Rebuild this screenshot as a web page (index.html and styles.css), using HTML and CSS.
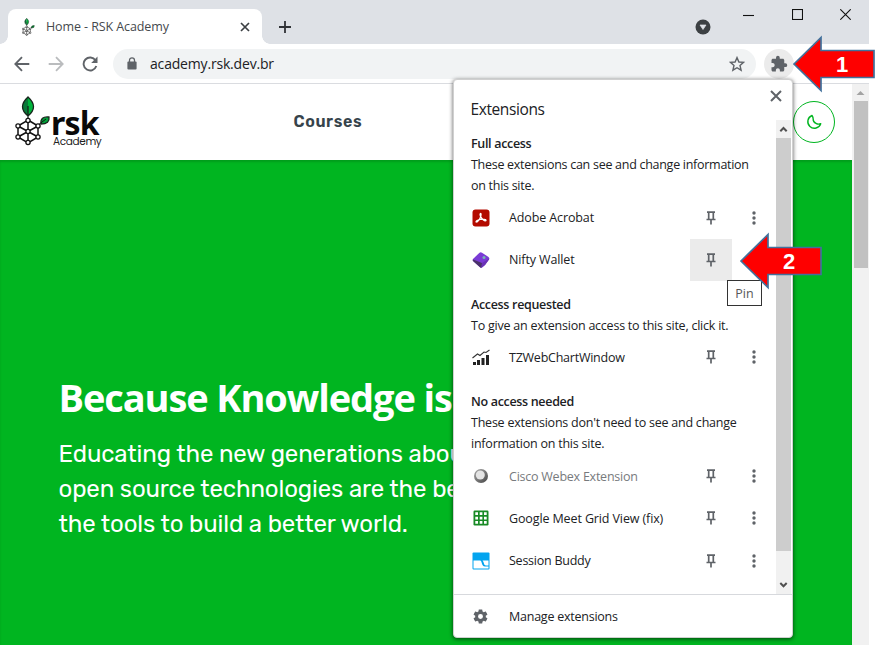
FILE: index.html
```html
<!DOCTYPE html>
<html lang="en">
<head>
<meta charset="utf-8">
<title>Home - RSK Academy</title>
<link rel="stylesheet" href="styles.css">
</head>
<body>
<svg class="defs" width="0" height="0">
  <symbol id="pin" viewBox="0 0 10 14"><path d="M1 1.100H9M2.700 1V8M7.300 1V8M0.500 8.500H9.500M5 8.500V13.500" fill="none" stroke="#5f6368" stroke-width="1.700"/></symbol>
  <symbol id="dots" viewBox="0 0 4 14"><circle cx="2" cy="2" r="1.700"/><circle cx="2" cy="7" r="1.700"/><circle cx="2" cy="12" r="1.700"/></symbol>
  <symbol id="tree" viewBox="0 0 36 50">
    <path d="M13 1Q2 11 13 20Z" fill="#087a38"/><path d="M13 1Q24 11 13 20Z" fill="#00b43c"/>
    <path d="M13 1Q2 11 13 20Q24 11 13 1ZM13 10V24" fill="none" stroke="#17251c" stroke-width="1.3"/>
    <path d="M26 28Q25 20 34 21Q35 28 26 28Z" fill="#00a33a" stroke="#17251c" stroke-width="1.3"/>
    <path d="M22 30L27 26L31 23" fill="none" stroke="#111" stroke-width="1"/>
    <path d="M13 24L23 30V41L13 47L3 41V30ZM13 24V47M3 30L23 41M23 30L3 41" fill="none" stroke="#111" stroke-width="1.500"/>
    <g fill="#fff" stroke="#111" stroke-width="1.300"><circle cx="13" cy="24.5" r="2.1"/><circle cx="23" cy="30" r="2.1"/><circle cx="23" cy="41" r="2.1"/><circle cx="13" cy="46.5" r="2.1"/><circle cx="3" cy="41" r="2.1"/><circle cx="3" cy="30" r="2.1"/><circle cx="13" cy="35.5" r="2.1"/></g>
  </symbol>
</svg>
<div class="window">
  <div class="tabstrip">
    <div class="tab">
      <svg class="favicon" width="13" height="18"><use href="#tree"/></svg>
      <span class="tab-title">Home - RSK Academy</span>
      <svg class="tab-close" width="10" height="10" viewBox="0 0 10 10"><path d="M1 1L9 9M9 1L1 9" stroke="#3c4043" stroke-width="1.7"/></svg>
    </div>
    <svg class="new-tab" width="14" height="14" viewBox="0 0 14 14"><path d="M7 1V13M1 7H13" stroke="#303236" stroke-width="1.8"/></svg>
    <div class="controls">
      <svg class="tab-search" width="16" height="16" viewBox="0 0 16 16"><circle cx="8" cy="8" r="7.5" fill="#3c4043"/><path d="M5 6H11L8 10.5Z" fill="#dee1e6" stroke="#dee1e6" stroke-width=".7"/></svg>
      <svg width="11" height="11" viewBox="0 0 11 11"><path d="M0 6.500H11" stroke="#111" stroke-width="1.1"/></svg>
      <svg width="11" height="11" viewBox="0 0 11 11"><rect x=".5" y=".5" width="10" height="10" fill="none" stroke="#111" stroke-width="1.1"/></svg>
      <svg width="11" height="11" viewBox="0 0 11 11"><path d="M.3 .3L10.7 10.7M10.7 .3L.3 10.7" stroke="#111" stroke-width="1.1"/></svg>
    </div>
  </div>
  <div class="toolbar">
    <svg class="nav" width="16" height="16" viewBox="0 0 16 16"><path d="M15.3 8H1.5M8 1.2L1.3 8L8 14.8" fill="none" stroke="#5f6368" stroke-width="1.8"/></svg>
    <svg class="nav" width="16" height="16" viewBox="0 0 16 16"><path d="M.7 8H14.5M8 1.2L14.7 8L8 14.8" fill="none" stroke="#babcbe" stroke-width="1.8"/></svg>
    <svg class="nav" width="16" height="16" viewBox="0 0 16 16"><path d="M13.5 4.3A6.5 6.5 0 1 0 14.3 10" fill="none" stroke="#5f6368" stroke-width="1.9"/><path d="M15.5 .6V7H9.2Z" fill="#5f6368"/></svg>
    <div class="omnibox">
      <svg width="10" height="13" viewBox="0 0 10 13"><rect x=".4" y="4.5" width="9.2" height="8" rx="1" fill="#5f6368"/><path d="M2.5 5V3.3A2.5 2.5 0 0 1 7.5 3.3V5" fill="none" stroke="#5f6368" stroke-width="1.3"/></svg>
      <span class="url">academy.rsk.dev.br</span>
      <svg class="star" width="16" height="16" viewBox="0 0 16 16"><path d="M8 1.6L9.9 6L14.6 6.4L11 9.5L12.1 14.2L8 11.7L3.9 14.2L5 9.5L1.4 6.4L6.1 6Z" fill="none" stroke="#5f6368" stroke-width="1.4"/></svg>
    </div>
    <div class="ext-button"><svg width="18" height="18" viewBox="0 0 24 24"><path fill="#5f6368" d="M20.5 11H19V7c0-1.1-.9-2-2-2h-4V3.500a2.500 2.500 0 0 0-5 0V5H4c-1.100 0-1.990.9-1.990 2v3.800H3.500c1.490 0 2.700 1.210 2.700 2.700s-1.210 2.700-2.700 2.700H2V20c0 1.100.9 2 2 2h3.800v-1.500c0-1.490 1.210-2.700 2.700-2.700s2.700 1.210 2.700 2.700V22H17c1.100 0 2-.9 2-2v-4h1.500a2.500 2.500 0 0 0 0-5z"/></svg></div>
  </div>
  <div class="viewport">
    <div class="page">
      <header class="site-header">
        <div class="brand">
          <svg width="36" height="50"><use href="#tree"/></svg>
          <div class="brand-text"><span class="brand-name">rsk</span><span class="brand-sub">Academy</span></div>
        </div>
        <span class="courses">Courses</span>
        <div class="theme"><svg width="16" height="16" viewBox="0 0 16 16"><path d="M6 1.500A6.600 6.600 0 1 0 14.700 9.700A5 5 0 0 1 10 9.300Q7 8 7.200 5.200Q7.200 3 6 1.500Z" fill="none" stroke="#00b520" stroke-width="1.4" stroke-linejoin="round"/></svg></div>
      </header>
      <main class="hero">
        <h1>Because Knowledge is</h1>
        <p>Educating the new generations about<br>open source technologies are the best<br>the tools to build a better world.</p>
      </main>
    </div>
    <div class="page-scroll">
      <svg width="17" height="17" viewBox="0 0 17 17"><path d="M4.500 11L8.500 7L12.500 11Z" fill="#a3a3a3"/></svg>
      <div class="page-thumb"></div>
    </div>
  </div>
</div>

<section class="popup">
  <div class="popup-head"><h2>Extensions</h2>
    <svg class="popup-close" width="12" height="12" viewBox="0 0 12 12"><path d="M1 1L11 11M11 1L1 11" stroke="#5f6368" stroke-width="2"/></svg></div>
  <div class="popup-body">
    <div class="list">
      <div class="group">
        <h3>Full access</h3>
        <p class="tight">These extensions can see and change information<br>on this site.</p>
        <div class="row"><svg class="ico" width="18" height="18" viewBox="0 0 18 18"><rect x=".5" y=".5" width="17" height="17" rx="3" fill="#b30b00"/><path d="M8.500 4.500C9.500 4.500 9 7.500 7.800 9.700C6.500 12 4.500 13.500 4 12.800C4 11.500 7.500 10.200 10.500 10.200C13 10.200 14.500 11 13.800 11.700C12.500 12.200 9.700 10 8.600 7.500C8 6 7.800 4.700 8.500 4.500Z" fill="none" stroke="#fff" stroke-width="1.300"/></svg><span class="name adobe">Adobe Acrobat</span><span class="pin"><svg width="10" height="14"><use href="#pin"/></svg></span><svg class="more" width="4" height="14"><use href="#dots"/></svg></div>
        <div class="row"><svg class="ico" width="18" height="18" viewBox="0 0 18 18"><path d="M7.500 1.700Q8.700 1 10 1.700L16.500 6Q17.700 7 17 8.500L13 14L10 16.500Q9 17 8 16.200L1 10Q.3 9 1 8Z" fill="#7a3bd6"/><path d="M1 8.500L10 12L9.500 16.800Q8.800 16.900 8 16.200L1 10Q.5 9.300 1 8.500Z" fill="#4a3269"/><path d="M10 12L17.200 7.500Q17.300 8 17 8.500L13 14L9.500 16.800Z" fill="#6a33b5"/><circle cx="12" cy="6.500" r="1.500" fill="#75b8b0"/></svg><span class="name adobe">Nifty Wallet</span><span class="pin hovered"><svg width="10" height="14"><use href="#pin"/></svg></span></div>
      </div>
      <div class="group">
        <h3>Access requested</h3>
        <p>To give an extension access to this site, click it.</p>
        <div class="row"><svg class="ico" width="18" height="18" viewBox="0 0 18 18"><path d="M1 14H4V17H1ZM5 12H8V17H5ZM9.500 10H12.500V17H9.500ZM14 7H17V17H14Z" fill="#222"/><path d="M.5 10L5.500 6L8 7.500L12 4L14 4.500L17.500 2" fill="none" stroke="#333" stroke-width="1.100"/></svg><span class="name">TZWebChartWindow</span><span class="pin"><svg width="10" height="14"><use href="#pin"/></svg></span><svg class="more" width="4" height="14"><use href="#dots"/></svg></div>
      </div>
      <div class="group">
        <h3>No access needed</h3>
        <p>These extensions don't need to see and change<br>information on this site.</p>
        <div class="row"><svg class="ico" width="18" height="18" viewBox="0 0 18 18"><defs><linearGradient id="ring" x1="0" y1="0" x2="1" y2="1"><stop offset="0" stop-color="#aaa"/><stop offset="1" stop-color="#454545"/></linearGradient></defs><circle cx="9" cy="9" r="7" fill="url(#ring)"/><circle cx="8.300" cy="8" r="4.500" fill="#e4e4e4"/></svg><span class="name muted">Cisco Webex Extension</span><span class="pin"><svg width="10" height="14"><use href="#pin"/></svg></span><svg class="more" width="4" height="14"><use href="#dots"/></svg></div>
        <div class="row"><svg class="ico" width="18" height="18" viewBox="0 0 18 18"><rect x="1.500" y="1.500" width="15" height="15" rx="1.200" fill="#188a25"/><path d="M3.300 3.300H6V6H3.300ZM7.700 3.300H10.400V6H7.700ZM12 3.300H14.700V6H12ZM3.300 7.700H6V10.400H3.300ZM7.700 7.700H10.400V10.400H7.700ZM12 7.700H14.700V10.400H12ZM3.300 12H6V14.700H3.300ZM7.700 12H10.400V14.700H7.700ZM12 12H14.700V14.700H12Z" fill="#fff"/></svg><span class="name meet">Google Meet Grid View (fix)</span><span class="pin"><svg width="10" height="14"><use href="#pin"/></svg></span><svg class="more" width="4" height="14"><use href="#dots"/></svg></div>
        <div class="row"><svg class="ico" width="18" height="18" viewBox="0 0 18 18"><rect x=".5" y=".5" width="17" height="17" rx="1" fill="#03a4ef"/><path d="M1.500 8.500H8C10.500 8.500 9 14.500 13 14.500H16.500V16.500H1.500Z" fill="#fff"/><path d="M10.500 8.500H16.500V13.500H14C11.500 13.500 12.300 10 10.500 8.500Z" fill="#fff"/></svg><span class="name">Session Buddy</span><span class="pin"><svg width="10" height="14"><use href="#pin"/></svg></span><svg class="more" width="4" height="14"><use href="#dots"/></svg></div>
      </div>
    </div>
    <div class="list-scroll">
      <svg width="15" height="18" viewBox="0 0 15 18"><path d="M4.300 11.300L7.500 8L10.700 11.300" fill="none" stroke="#505050" stroke-width="2"/></svg>
      <div class="list-thumb"></div>
      <svg width="15" height="18" viewBox="0 0 15 18"><path d="M4.300 7L7.500 10.300L10.700 7" fill="none" stroke="#505050" stroke-width="2"/></svg>
    </div>
  </div>
  <div class="manage"><svg class="ico" width="17" height="17" viewBox="0 0 24 24"><path fill="#5f6368" d="M19.430 12.980c.04-.32.070-.64.070-.98s-.03-.66-.07-.98l2.110-1.650c.19-.15.24-.42.12-.64l-2-3.460c-.12-.22-.39-.3-.61-.22l-2.490 1c-.52-.4-1.080-.73-1.690-.98l-.38-2.650C14.460 2.180 14.250 2 14 2h-4c-.25 0-.46.18-.49.42l-.38 2.650c-.61.25-1.170.59-1.690.98l-2.490-1c-.23-.09-.49 0-.61.22l-2 3.460c-.13.22-.07.49.12.64l2.110 1.650c-.04.32-.07.65-.07.98s.03.66.07.98l-2.110 1.650c-.19.15-.24.42-.12.64l2 3.460c.12.22.39.3.61.22l2.490-1c.52.4 1.080.73 1.690.98l.38 2.650c.03.24.24.42.49.42h4c.25 0 .46-.18.49-.42l.38-2.650c.61-.25 1.170-.59 1.690-.98l2.490 1c.23.09.49 0 .61-.22l2-3.460c.12-.22.070-.49-.12-.64l-2.110-1.650zM12 15.500A3.500 3.500 0 1 1 12 8.500A3.500 3.500 0 0 1 12 15.500z"/></svg><span class="name">Manage extensions</span></div>
</section>
<div class="tooltip">Pin</div>
<svg class="callout one" width="84" height="58" viewBox="0 0 84 58"><path d="M2 29L29 2.500V15.500H82V42.500H29V55.500Z" fill="#fe0000" stroke="#41719c" stroke-width="1.700"/><text x="44" y="37">1</text></svg>
<svg class="callout two" width="84" height="58" viewBox="0 0 84 58"><path d="M2 29L29 2.500V15.500H82V42.500H29V55.500Z" fill="#fe0000" stroke="#41719c" stroke-width="1.700"/><text x="44" y="37">2</text></svg>
</body>
</html>
```
FILE: styles.css
```css
* { box-sizing: border-box; margin: 0; padding: 0; }
body { width: 878px; height: 645px; overflow: hidden; position: relative; background: #fff; color: #202124; font: 13px "Open Sans", "Noto Sans", sans-serif; }
svg { display: block; flex: none; }
.defs { position: absolute; }
span { white-space: nowrap; }
.window { width: 869px; height: 645px; display: flex; flex-direction: column; }

.tabstrip { height: 44px; background: #dee1e6; display: flex; align-items: flex-start; padding-left: 8px; }
.tab { width: 254px; height: 35px; margin-top: 9px; border-radius: 8px 8px 0 0; background: #fff; display: flex; align-items: center; padding: 0 12px 0 14px; position: relative; }
.tab::before, .tab::after { content: ""; position: absolute; bottom: 0; width: 8px; height: 8px; }
.tab::before { left: -8px; background: radial-gradient(circle at 0 0, #dee1e6 7.5px, #fff 8px); }
.tab::after { right: -8px; background: radial-gradient(circle at 100% 0, #dee1e6 7.5px, #fff 8px); }
.tab-title { margin-left: 11px; color: #45494d; font-size: 12.500px; letter-spacing: -.1px; }
.tab-close { margin-left: auto; }
.new-tab { margin: 20px 0 0 16px; }
.controls { margin-left: auto; display: flex; gap: 37.500px; padding: 9px 18px 0 0; }
.tab-search { margin: 10px -5px 0 0; }

.toolbar { height: 40px; flex: none; border-bottom: 1px solid #dadce0; display: flex; align-items: center; padding-left: 14px; }
.nav { margin-right: 18px; }
.omnibox { width: 643px; height: 30px; margin-left: -3px; border-radius: 15px; background: #f1f3f4; display: flex; align-items: center; padding: 0 11px 0 14px; }
.url { font-size: 14px; margin-left: 13px; color: #202124; letter-spacing: -.18px; }
.star { margin-left: auto; }
.ext-button { width: 30px; height: 30px; border-radius: 50%; margin-left: 8px; background: #ebebeb; display: flex; align-items: center; justify-content: center; }

.viewport { flex: 1; display: flex; }
.page { width: 852px; display: flex; flex-direction: column; }
.site-header { height: 76px; display: flex; align-items: center; padding: 0 17px 0 15px; }
.brand { display: flex; width: 86px; margin-top: -1px; }
.brand-text { display: flex; flex-direction: column; }
.brand-name { font: 700 32px/32px "Noto Sans", sans-serif; color: #090909; letter-spacing: -.8px; margin: 11px 0 0 0; }
.brand-sub { font: 10.500px/12px Poppins, Inter, sans-serif; color: #222; letter-spacing: -.35px; margin: -3px 0 0 2px; }
.courses { font: 600 16px Rubik, Roboto, sans-serif; color: #36434b; letter-spacing: .6px; margin: -2px 0 0 192.500px; }
.theme { margin-left: auto; width: 42px; height: 42px; border: 1px solid #00b520; border-radius: 50%; display: flex; align-items: center; justify-content: center; }
.hero { flex: 1; background: #00b520; color: #fff; padding: 211px 0 0 58.500px; box-shadow: inset 0 2px 2px #009d1c; }
.hero h1 { font: 700 38px/52px "Open Sans", sans-serif; white-space: nowrap; letter-spacing: -1.100px; }
.hero p { font: 24px/35px Rubik, Roboto, sans-serif; letter-spacing: -.13px; margin-top: 14px; white-space: nowrap; }
.page-scroll { width: 17px; background: #f1f1f1; }
.page-thumb { width: 14px; height: 167px; margin: 0 auto; background: #c1c1c1; }

.popup { position: absolute; left: 453px; top: 79px; width: 340px; height: 559px; background: #fff; border: 1px solid #d0d0d0; border-radius: 4px; box-shadow: 0 1px 4px rgba(0,0,0,.65); display: flex; flex-direction: column; overflow: hidden; }
.popup-head { height: 40px; display: flex; justify-content: space-between; padding: 10px 10px 0 16.500px; }
.popup-head h2 { font-size: 15.500px; line-height: 38px; font-weight: 400; letter-spacing: -.4px; }
.popup-body { height: 474px; display: flex; }
.list { width: 322px; padding: 12.500px 0 0 17px; }
.group { margin-bottom: 13px; }
.group h3 { font-size: 12.500px; line-height: 21px; font-weight: 600; letter-spacing: -.32px; white-space: nowrap; }
.group p { font-size: 12.500px; line-height: 21px; letter-spacing: -.23px; padding-bottom: .7px; white-space: nowrap; }
.group .tight { letter-spacing: -.28px; padding-bottom: 1px; }
.row { height: 42px; display: flex; align-items: center; padding-left: 1px; }
.row + .row { margin-top: .3px; }
.name { margin-left: 19px; font-size: 12.500px; letter-spacing: -.24px; }
.adobe { letter-spacing: -.12px; }
.meet { letter-spacing: -.12px; }
.muted { color: #777a7d; }
.pin { width: 42px; height: 42px; margin-left: auto; display: flex; align-items: center; justify-content: center; }
.hovered { background: #ebebeb; margin-right: 44px; }
.more { margin: 0 20px; fill: #5f6368; }
.list-scroll { width: 15px; height: 474px; background: #f1f1f1; display: flex; flex-direction: column; }
.list-thumb { height: 413px; margin-bottom: 25px; background: #cdcdcd; }
.manage { height: 44px; border-top: 1px solid #d7d9dd; display: flex; align-items: center; padding-left: 18px; }
.manage .name { margin-left: 20px; }
.tooltip { position: absolute; left: 727px; top: 280px; width: 35px; height: 26px; border: 1px solid #333; background: #fff; color: #575757; font-size: 12.500px; line-height: 25px; text-align: center; }
.callout { position: absolute; }
.one { left: 792px; top: 35px; }
.two { left: 739px; top: 232px; }
.callout text { font: 700 22px "Liberation Sans", sans-serif; fill: #fff; }
```
